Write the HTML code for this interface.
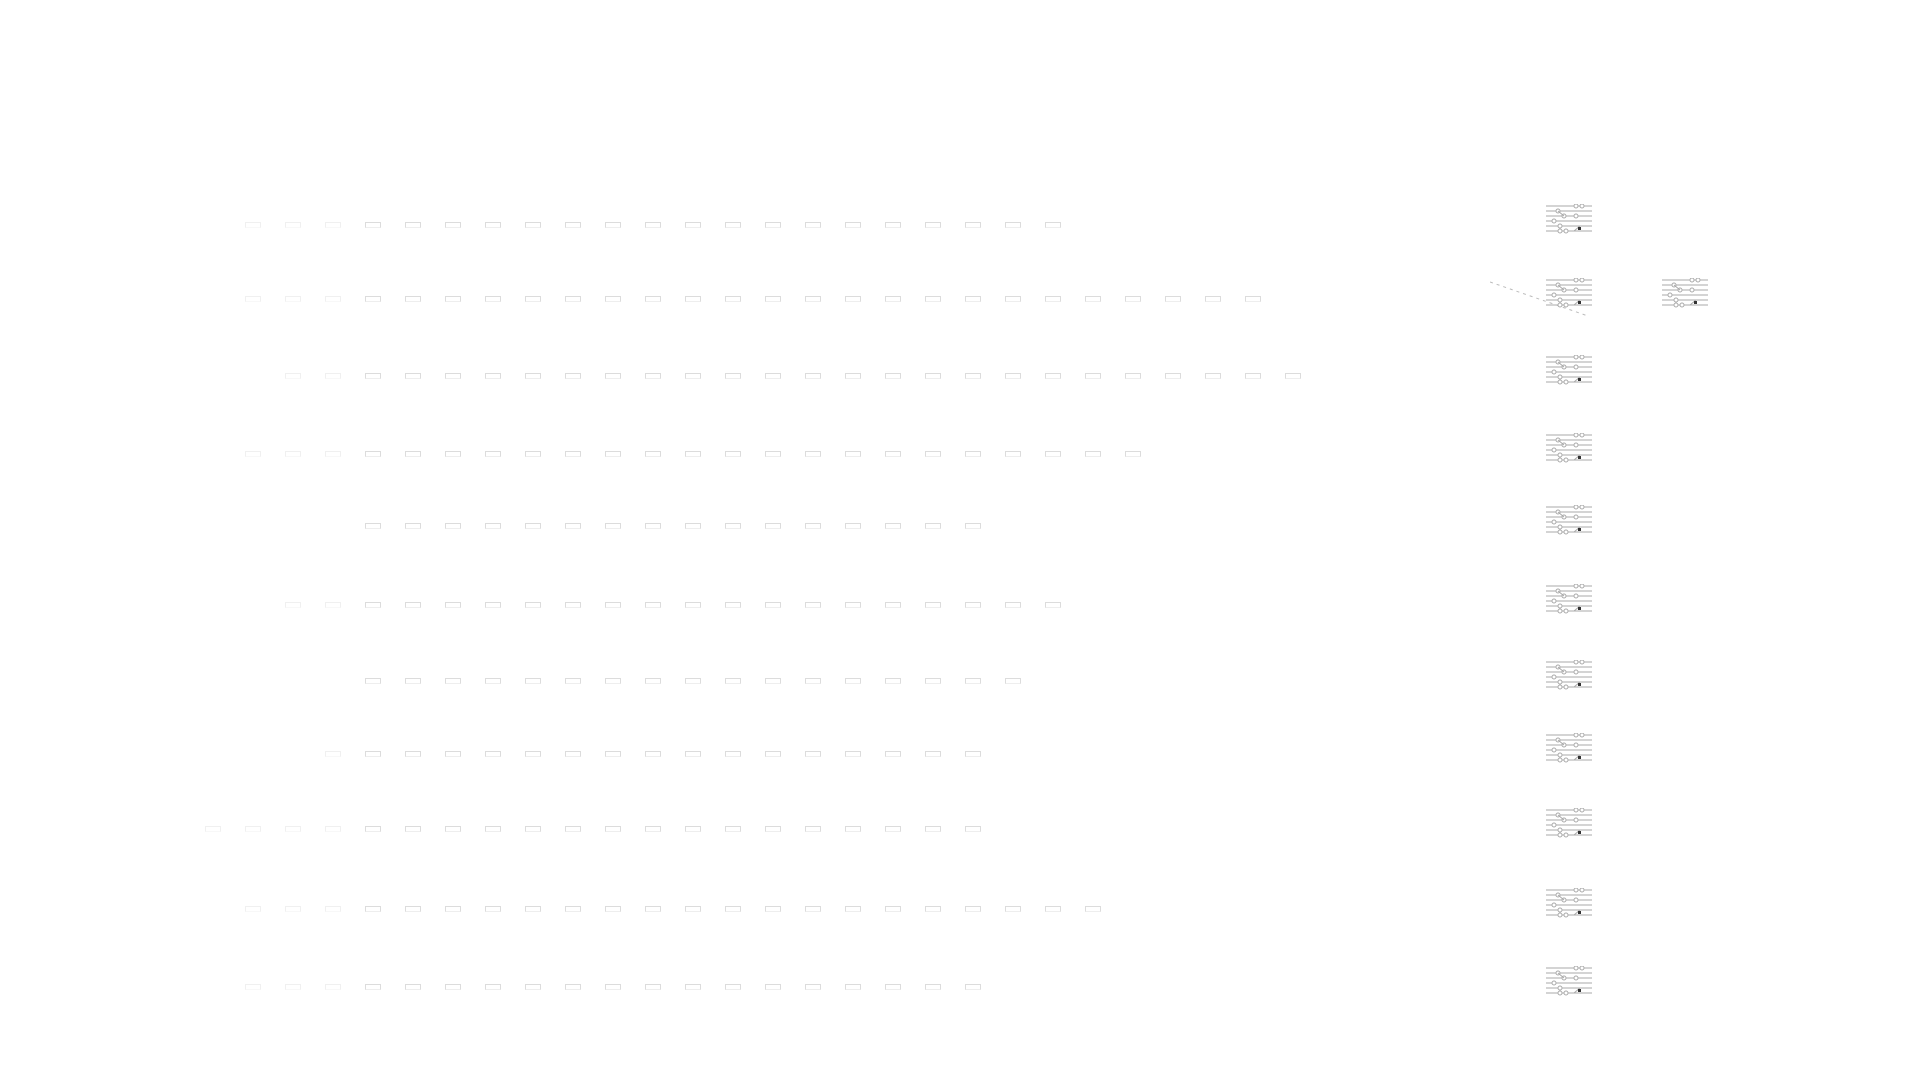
<!DOCTYPE html>
<html><head><meta charset="utf-8"><style>
html,body{margin:0;background:#fff;width:1920px;height:1080px;overflow:hidden;font-family:"Liberation Sans",sans-serif}
.r{position:absolute;width:14px;height:4px;border:1px solid #dcdcdc;border-bottom-color:#eee}
.c{position:absolute;width:46px;height:30px}
</style></head><body>
<svg width="0" height="0" style="position:absolute"><defs>
<g id="circ" stroke="#aaa" stroke-width="1" fill="none">
<line x1="0" y1="2" x2="46" y2="2"/><line x1="0" y1="7" x2="46" y2="7"/><line x1="0" y1="12" x2="46" y2="12"/>
<line x1="0" y1="17" x2="46" y2="17"/><line x1="0" y1="22" x2="46" y2="22"/><line x1="0" y1="27" x2="46" y2="27"/>
<circle cx="30" cy="2" r="2" fill="#fff"/><circle cx="36" cy="2" r="2" fill="#fff"/>
<circle cx="12" cy="7" r="2" fill="#fff"/><circle cx="18" cy="12" r="2" fill="#fff"/>
<circle cx="30" cy="12" r="2" fill="#fff"/><circle cx="8" cy="17" r="2" fill="#fff"/>
<circle cx="14" cy="22" r="2" fill="#fff"/><circle cx="14" cy="27" r="2" fill="#fff"/><circle cx="20" cy="27" r="2" fill="#fff"/>
<line x1="12" y1="7" x2="18" y2="12"/><line x1="28" y1="27" x2="34" y2="22"/>
<rect x="32" y="23" width="3" height="3" fill="#333" stroke="none"/>
</g></defs></svg>
<svg style="position:absolute;left:1490px;top:280px" width="100" height="40"><line x1="0" y1="2" x2="98" y2="36" stroke="#bbb" stroke-dasharray="3,4"/></svg>
<div id="w"></div>
<script>
var rows=[[222,1065],[296,1265],[373,1305],[451,1145],[523,985],[602,1065],[678,1025],[751,985],[826,985],[906,1105],[984,985]];
var starts=[245,245,285,245,365,285,365,325,205,245,245];
var h='';
rows.forEach(function(r,i){
  for(var x=starts[i];x<=r[1];x+=40){
    var op=x<330?0.4:1;
    h+='<div class="r" style="left:'+x+'px;top:'+r[0]+'px;opacity:'+op+'"></div>';
  }
  h+='<svg class="c" style="left:1546px;top:'+(r[0]-18)+'px" viewBox="0 0 46 30"><use href="#circ"/></svg>';
});
h+='<svg class="c" style="left:1662px;top:278px" viewBox="0 0 46 30"><use href="#circ"/></svg>';
document.getElementById('w').innerHTML=h;
</script>
</body></html>
